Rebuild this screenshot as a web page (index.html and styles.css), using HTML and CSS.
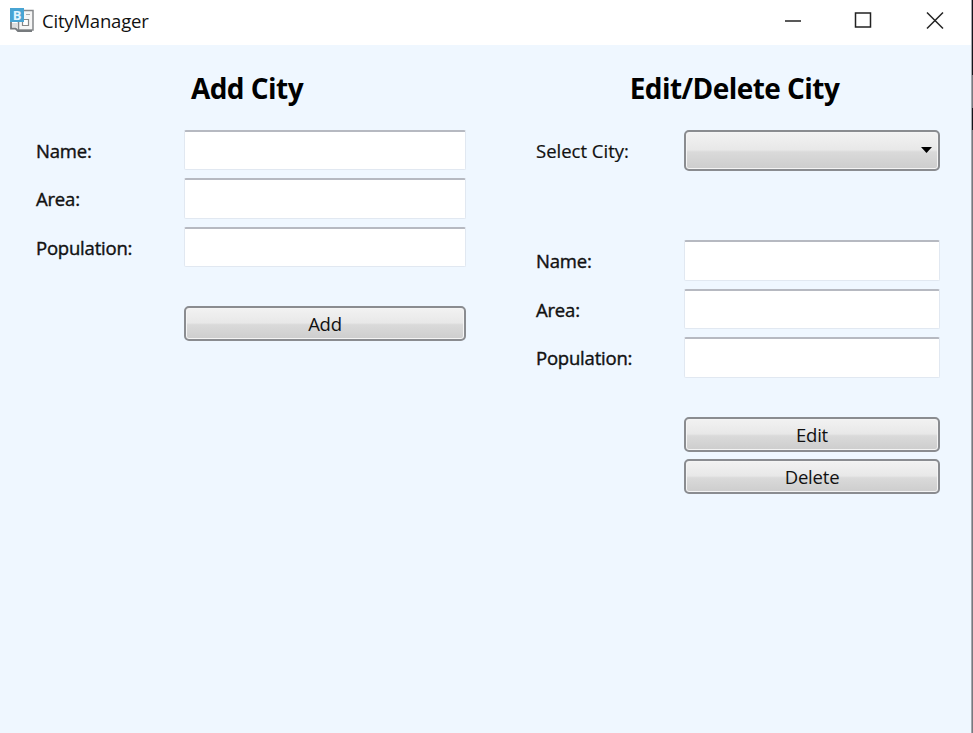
FILE: index.html
```html
<!DOCTYPE html>
<html lang="en">
<head>
<meta charset="utf-8">
<title>CityManager</title>
<link rel="stylesheet" href="styles.css">
</head>
<body>
<div class="window">
  <header class="titlebar">
    <svg class="app-icon" width="26" height="26" viewBox="0 0 26 26">
      <path d="M9.500 3.500h14.500v19.500h-14.500z" fill="#f6f6f6" stroke="#85888b" stroke-width="1.500"/>
      <path d="M2 15v6.500h4.500l2.500 2.500h14" fill="none" stroke="#777b7e" stroke-width="1.800"/>
      <path d="M3 16h6v4.500h-6z" fill="#dcdedf"/>
      <path d="M13.500 12.500h6v6h-6z" fill="#fff" stroke="#888" stroke-width="1.200"/>
      <path d="M17 7.500h4" stroke="#aaa"/>
      <rect x="1" y="1" width="14" height="14" fill="#48a4d3"/>
      <text class="icon-letter" x="8" y="12.500" text-anchor="middle">B</text>
    </svg>
    <span class="app-name">CityManager</span>
    <svg class="controls" width="162" height="20" viewBox="0 0 162 20" fill="none" stroke="#222" stroke-width="1.500">
      <path d="M1 11h16"/>
      <path d="M71.500 3h15v14h-15z"/>
      <path d="M143 2.500l16 16M159 2.500l-16 16"/>
    </svg>
  </header>
  <main class="content">
    <section class="form form-add">
      <h1 class="heading">Add City</h1>
      <div class="row"><label for="an">Name:</label><input id="an"></div>
      <div class="row"><label for="aa">Area:</label><input id="aa"></div>
      <div class="row"><label for="ap">Population:</label><input id="ap"></div>
      <div class="actions"><button>Add</button></div>
    </section>
    <section class="form form-edit">
      <h1 class="heading">Edit/Delete City</h1>
      <div class="row row-select"><label class="light">Select City:</label>
        <button class="combo" aria-label="City"><svg width="11" height="6" viewBox="0 0 11 6"><path d="M0 0h11l-5.500 6z"/></svg></button></div>
      <div class="row"><label for="en">Name:</label><input id="en"></div>
      <div class="row"><label for="ea">Area:</label><input id="ea"></div>
      <div class="row"><label for="ep">Population:</label><input id="ep"></div>
      <div class="actions"><button>Edit</button><button>Delete</button></div>
    </section>
  </main>
</div>
</body>
</html>
```
FILE: styles.css
```css
* { box-sizing: border-box; }
body {
  margin: 0;
  height: 733px;
  overflow: hidden;
  font-family: "Open Sans", "Noto Sans", sans-serif;
  color: #111;
  background: linear-gradient(#15151b 0 75px, #77787e 75px 108px, #15151b 108px 130px, #77787e 130px);
}
.window { width: 972px; height: 733px; background: #eff7ff; border-right: 1px solid #a3a8ae; }
.titlebar {
  height: 45px;
  display: flex;
  align-items: flex-start;
  background: #fff;
  padding: 7px 25px 0 9px;
}
.icon-letter { font: 700 13px "Open Sans", sans-serif; fill: #e4f6ff; }
.app-name {
  margin-left: 7px;
  font-size: 18.500px;
  line-height: 28px;
  letter-spacing: -0.200px;
}
.controls { margin: 3px 0 0 auto; }
.content { display: flex; justify-content: space-between; padding: 26px 31px 0 36px; }
.form-add { width: 430px; }
.form-edit { width: 404px; }
.heading {
  margin: 0 0 23.500px;
  height: 35px;
  line-height: 34px;
  font-size: 28px;
  font-weight: 700;
  color: #000;
  text-align: center;
  letter-spacing: -0.550px;
}
.form-add .heading { padding-right: 8px; }
.form-edit .heading { padding-right: 7px; }
.row { display: grid; grid-template: 40.500px / 148px 1fr; margin-bottom: 8px; }
.row-select { margin-bottom: 70px; }
label {
  line-height: 42px;
  font-size: 18.500px;
  letter-spacing: -0.200px;
  -webkit-text-stroke: 0.400px #111;
}
.light { letter-spacing: 0; -webkit-text-stroke-width: 0.200px; }
input {
  width: 100%;
  min-width: 0;
  height: 100%;
  border: 1px solid #e1e8f1;
  border-top: 2px solid #b6b9c1;
  border-radius: 2px;
  outline: 0;
  background: #fff;
}
button {
  height: 35px;
  border: 2px solid #8a8c90;
  border-radius: 5px;
  padding: 0;
  font: 400 18.500px/31px "Open Sans", "Noto Sans", sans-serif;
  letter-spacing: -0.200px;
  color: #111;
  background: linear-gradient(#f2f2f2, #e8e8e8 48%, #dadada 54%, #cdcdcd);
  box-shadow: inset 0 0 0 1px #f4f4f4;
}
.actions { margin: 39px 0 0 148px; display: grid; gap: 7.500px; }
.combo { height: 41px; display: flex; justify-content: flex-end; align-items: center; padding-right: 6px; }
```
